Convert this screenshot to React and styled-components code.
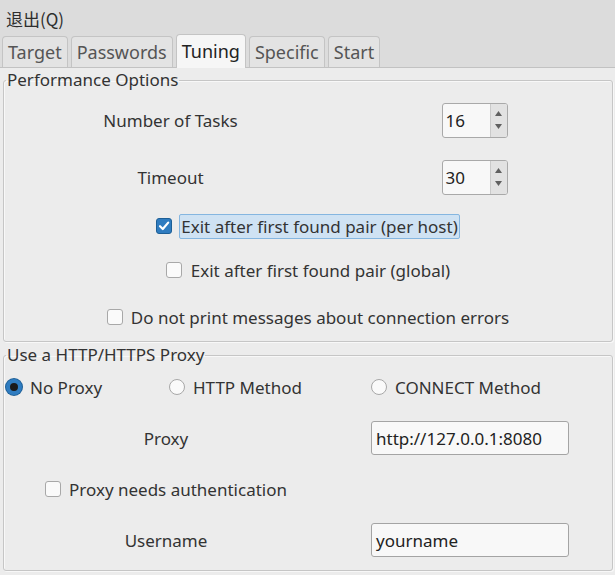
import React from "react";
import styled, { createGlobalStyle } from "styled-components";

const Global = createGlobalStyle`
  html, body { margin: 0; padding: 0; background: #ececec; }
  body { font-family: "Noto Sans", "Noto Sans CJK SC", sans-serif; font-size: 17px; color: #333; }
`;

const Window = styled.div`
  width: 615px;
  height: 575px;
  overflow: hidden;
  background: #ececec;
  display: flex;
  flex-direction: column;
`;

const MenuBar = styled.div`
  height: 33px;
  display: flex;
  align-items: center;
  padding: 3px 0 0 6px;
  box-sizing: border-box;
  background: #dcdcdc;
  font-family: "Noto Sans CJK SC", "Noto Sans", sans-serif;
  font-size: 17px;
  color: #2e2e2e;
`;

const TabBar = styled.div`
  height: 34px;
  display: flex;
  align-items: flex-end;
  gap: 3px;
  padding-left: 2px;
  background: #dcdcdc;
  border-bottom: 1px solid #c2c2c2;
`;

const Tab = styled.div`
  height: ${(p) => (p.$active ? 34 : 31)}px;
  box-sizing: border-box;
  padding: 0 5px ${(p) => (p.$active ? 2 : 0)}px;
  display: flex;
  align-items: center;
  border: 1px solid #c4c4c4;
  border-bottom: none;
  border-radius: 4px 4px 0 0;
  background: ${(p) => (p.$active ? "#f6f6f6" : "#e3e3e3")};
  color: ${(p) => (p.$active ? "#222" : "#555")};
  font-size: 18px;
  margin-bottom: ${(p) => (p.$active ? -1 : 0)}px;
`;

const Body = styled.div`
  flex: 1;
  display: flex;
  flex-direction: column;
  padding: 1px 2px 0 3px;
`;

const Group = styled.fieldset`
  margin: 0;
  padding: 0;
  border: 1px solid #c6c6c6;
  border-radius: 3px;
  box-shadow: inset 1px 1px 0 #f8f8f8, 1px 1px 0 #f8f8f8;
  min-width: 0;
  & + & { margin-top: 2px; }
`;

const Legend = styled.legend`
  margin-left: 2px;
  padding: 0 1px;
  font-size: 17px;
  color: #333;
  line-height: 22px;
`;

const Grid = styled.div`
  display: grid;
  grid-template-columns: ${(p) => p.$cols};
`;

const Cell = styled.div`
  display: flex;
  align-items: center;
  justify-content: center;
  height: ${(p) => p.$h}px;
  grid-column: ${(p) => (p.$span ? "1 / -1" : "auto")};
`;

const Label = styled.span`
  font-size: 17px;
  color: #333;
`;

const Spin = styled.div`
  width: 66px;
  height: 35px;
  box-sizing: border-box;
  display: flex;
  border: 1px solid #a9a9a9;
  border-radius: 3px;
  overflow: hidden;
  background: #f8f8f8;
`;

const SpinValue = styled.div`
  flex: 1;
  display: flex;
  align-items: center;
  padding-left: 3px;
  font-size: 17px;
  color: #222;
`;

const SpinButtons = styled.div`
  width: 16px;
  border-left: 1px solid #cacaca;
  background: #e2e2e2;
  display: flex;
  flex-direction: column;
  align-items: center;
  justify-content: center;
  gap: 8px;
`;

const TextInput = styled.div`
  width: 198px;
  height: 34px;
  box-sizing: border-box;
  border: 1px solid #a4a4a4;
  border-radius: 3px;
  background: #f8f8f8;
  display: flex;
  align-items: center;
  padding-left: 4px;
  font-size: 17px;
  color: #222;
`;

const Check = styled.label`
  display: flex;
  align-items: center;
  gap: ${(p) => p.$gap || 9}px;
  font-size: 17px;
  color: #333;
`;

const Box = styled.span`
  width: 16px;
  height: 16px;
  box-sizing: border-box;
  border-radius: 3px;
  border: 1px solid ${(p) => (p.$on ? "#1d5f96" : "#a8a8a8")};
  background: ${(p) => (p.$on ? "#2f7cc0" : "#fafafa")};
  display: flex;
  align-items: center;
  justify-content: center;
`;

const Focus = styled.span`
  padding: 0 1px;
  line-height: 23px;
  border: 1px solid #85b6e0;
  border-radius: 2px;
  background: #cfe2f3;
`;

const RadioRow = styled.div`
  display: flex;
  align-items: center;
  height: 42px;
  padding-left: 2px;
`;

const RadioItem = styled.label`
  display: flex;
  align-items: center;
  gap: 8px;
  width: ${(p) => p.$w}px;
  font-size: 17px;
  color: #333;
`;

const Radio = styled.span`
  width: 16px;
  height: 16px;
  box-sizing: border-box;
  border-radius: 50%;
  border: ${(p) => (p.$on ? "4px solid #2f7cc0" : "1px solid #a8a8a8")};
  background: ${(p) => (p.$on ? "#1a1a1a" : "#fafafa")};
  box-shadow: ${(p) => (p.$on ? "0 0 0 1px #1d5f96" : "none")};
`;

const Arrow = ({ up }) => (
  <svg width="7" height="5" viewBox="0 0 7 5">
    <polygon points={up ? "3.5,0 7,5 0,5" : "0,0 7,0 3.5,5"} fill="#606060" />
  </svg>
);

const SpinBox = ({ value }) => (
  <Spin>
    <SpinValue>{value}</SpinValue>
    <SpinButtons>
      <Arrow up />
      <Arrow />
    </SpinButtons>
  </Spin>
);

const CheckMark = () => (
  <svg width="12" height="12" viewBox="0 0 12 12">
    <path d="M2 6.2 L4.8 9 L10.2 2.6" fill="none" stroke="#fff" strokeWidth="2.2" strokeLinecap="round" strokeLinejoin="round" />
  </svg>
);

export default function App() {
  return (
    <Window>
      <Global />
      <MenuBar>退出(Q)</MenuBar>
      <TabBar>
        <Tab>Target</Tab>
        <Tab>Passwords</Tab>
        <Tab $active>Tuning</Tab>
        <Tab>Specific</Tab>
        <Tab>Start</Tab>
      </TabBar>
      <Body>
        <Group>
          <Legend>Performance Options</Legend>
          <Grid $cols="333px 1fr">
            <Cell $h={58}><Label>Number of Tasks</Label></Cell>
            <Cell $h={58}><SpinBox value="16" /></Cell>
            <Cell $h={56}><Label>Timeout</Label></Cell>
            <Cell $h={56}><SpinBox value="30" /></Cell>
            <Cell $h={42} $span>
              <Check $gap={7}>
                <Box $on><CheckMark /></Box>
                <Focus>Exit after first found pair (per host)</Focus>
              </Check>
            </Cell>
            <Cell $h={46} $span>
              <Check $gap={9}>
                <Box />
                Exit after first found pair (global)
              </Check>
            </Cell>
            <Cell $h={48} $span>
              <Check $gap={8}>
                <Box />
                Do not print messages about connection errors
              </Check>
            </Cell>
          </Grid>
        </Group>
        <Group>
          <Legend>Use a HTTP/HTTPS Proxy</Legend>
          <RadioRow>
            <RadioItem $w={163}><Radio $on />No Proxy</RadioItem>
            <RadioItem $w={202}><Radio />HTTP Method</RadioItem>
            <RadioItem $w={240}><Radio />CONNECT Method</RadioItem>
          </RadioRow>
          <Grid $cols="324px 1fr">
            <Cell $h={60}><Label>Proxy</Label></Cell>
            <Cell $h={60}><TextInput>http://127.0.0.1:8080</TextInput></Cell>
            <Cell $h={42}>
              <Check $gap={8}>
                <Box />
                Proxy needs authentication
              </Check>
            </Cell>
            <Cell $h={42} />
            <Cell $h={60}><Label>Username</Label></Cell>
            <Cell $h={60}><TextInput>yourname</TextInput></Cell>
          </Grid>
        </Group>
      </Body>
    </Window>
  );
}
